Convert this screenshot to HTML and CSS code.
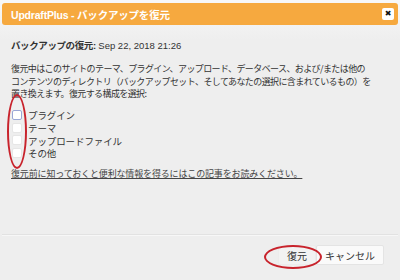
FILE: index.html
```html
<!DOCTYPE html>
<html lang="ja">
<head>
    <meta charset="UTF-8">
    <title>UpdraftPlus - バックアップを復元</title>
    <link rel="stylesheet" href="styles.css">
</head>
<body>
    <div class="dialog">
        <div class="titlebar">
            <span class="title">UpdraftPlus - バックアップを復元</span>
            <button class="close" type="button">&#x2716;</button>
        </div>

        <div class="content">
            <p class="heading"><strong>バックアップの復元:</strong> Sep 22, 2018 21:26</p>
            <p class="desc">
                復元中はこのサイトのテーマ、プラグイン、アップロード、データベース、および/または他の<br>
                コンテンツのディレクトリ（バックアップセット、そしてあなたの選択に含まれているもの）を<br>
                置き換えます。復元する構成を選択:
            </p>

            <div class="options">
                <label class="option"><input type="checkbox" class="check is-focus">プラグイン</label>
                <label class="option"><input type="checkbox" class="check">テーマ</label>
                <label class="option"><input type="checkbox" class="check">アップロードファイル</label>
                <label class="option"><input type="checkbox" class="check">その他</label>
                <span class="mark mark-options"></span>
            </div>

            <p class="note"><a href="#">復元前に知っておくと便利な情報を得るにはこの記事をお読みください。</a></p>
        </div>

        <div class="buttonpane">
            <div class="buttonset">
                <button type="button" class="btn btn-restore">復元</button>
                <button type="button" class="btn">キャンセル</button>
                <span class="mark mark-restore"></span>
            </div>
        </div>
    </div>
</body>
</html>
```

FILE: styles.css
```css
:root {
    --orange: #f6a93f;
    --text: #333;
    --panel: #eeeeee;
    --annotation: #c8232c;
}

body {
    margin: 0;
    background-color: #f6f6f6;
    font-family: "Noto Sans CJK JP", "Noto Sans", sans-serif;
    color: var(--text);
}

.dialog {
    width: 400px;
    height: 280px;
    box-sizing: border-box;
    padding: 3px 2px 0;
    background: linear-gradient(#f7f7f7 0, #f7f7f7 3px, var(--panel) 40px);
    display: flex;
    flex-direction: column;
}

.titlebar {
    height: 22px;
    background-color: var(--orange);
    border-radius: 3px;
    display: flex;
    align-items: center;
    justify-content: space-between;
    padding: 0 4px 0 9px;
}

.title {
    color: #fff;
    font-family: "Liberation Sans", "Noto Sans CJK JP", sans-serif;
    font-weight: bold;
    font-size: 10.5px;
    letter-spacing: -0.2px;
}

.close {
    width: 12px;
    height: 12px;
    padding: 0;
    border: none;
    border-radius: 2px;
    background-color: #fff;
    color: #111;
    font-size: 8px;
    line-height: 12px;
    font-family: "DejaVu Sans", sans-serif;
}

.content {
    padding: 0 9px;
    flex: 1;
    font-size: 9px;
}

.heading {
    margin: 15px 0 0;
    font-family: "Liberation Sans", "Noto Sans CJK JP", sans-serif;
    font-size: 9.5px;
    line-height: 12px;
}

.heading strong {
    letter-spacing: -0.4px;
}

.desc {
    margin: 11px 0 0;
    font-size: 9px;
    line-height: 12.5px;
    letter-spacing: -0.6px;
}

.options {
    position: relative;
    margin-top: 8px;
}

.option {
    display: flex;
    align-items: center;
    height: 12.8px;
    font-size: 9.5px;
    letter-spacing: -0.1px;
}

.check {
    appearance: none;
    width: 10px;
    height: 10px;
    margin: 0 6px 0 1px;
    background-color: #fff;
    border: 1px solid #e6e6e6;
    border-radius: 2px;
}

.check.is-focus {
    border-color: #9aa7d6;
}

.note {
    margin: 7px 0 0;
    font-size: 9px;
    letter-spacing: -0.15px;
}

.note a {
    color: #444;
    text-decoration: underline;
}

.buttonpane {
    height: 45px;
    border-top: 1px solid #e2e2e2;
    box-shadow: inset 0 1px 0 #f7f7f7;
}

.buttonset {
    position: relative;
    display: flex;
    justify-content: flex-end;
    align-items: center;
    padding: 10px 14px 0 0;
}

.btn {
    height: 20px;
    padding: 0 8px;
    border: 1px solid #e4e4e4;
    border-radius: 2px;
    background-color: #fafafa;
    color: #333;
    font-family: "Noto Sans CJK JP", sans-serif;
    font-size: 10px;
}

.btn-restore {
    width: 38px;
    border-color: #ececec;
    background-color: #f2f2f2;
}

/* red annotation ellipses drawn over the screenshot */
.mark {
    position: absolute;
    border: 2px solid var(--annotation);
    border-radius: 50%;
}

.mark-options {
    left: -4px;
    top: -15px;
    width: 16px;
    height: 71px;
}

.mark-restore {
    right: 76px;
    top: 10px;
    width: 54px;
    height: 20px;
}
```
